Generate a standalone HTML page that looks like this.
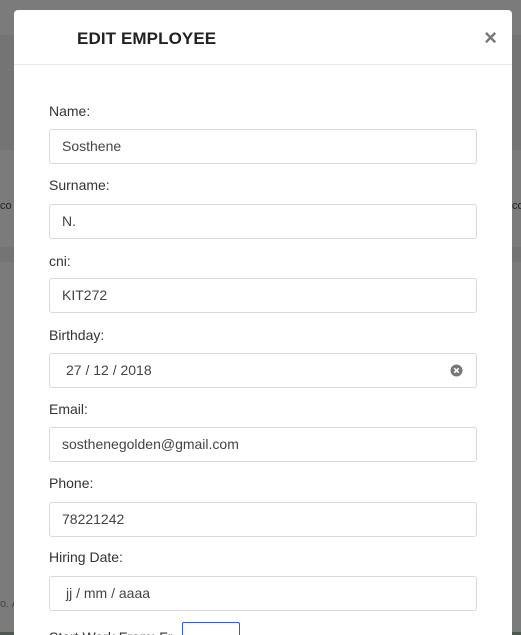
<!DOCTYPE html>
<html><head><style>
html,body{margin:0;width:521px;height:635px;overflow:hidden}
body{background:#7b7b7b;font-family:"Liberation Sans",sans-serif;position:relative}
.band{position:absolute;left:0;right:0;background:#747474}
.modal{position:absolute;left:14px;top:10px;width:498px;height:625px;background:#fff;border-radius:4px 4px 0 0;overflow:hidden}
.hdr{height:54px;border-bottom:1px solid #e3e8ee;position:relative}
.hdr h4{margin:0;position:absolute;left:63px;top:19px;font-size:17px;font-weight:bold;letter-spacing:0.1px;color:#222}
.x{position:absolute;right:15px;top:15px;font-size:22px;color:#777;font-weight:bold}
.lbl{position:absolute;left:35px;font-size:14px;color:#333}
.in{position:absolute;left:35px;width:426px;height:33px;border:1px solid #d9d9d9;border-radius:3px;font-size:14px;color:#444;line-height:33px;box-sizing:content-box}
.in span{padding-left:12px}
</style></head><body>
<div class="band" style="top:35px;height:115px"></div>
<div class="band" style="top:247px;height:15px"></div>
<div style="position:absolute;left:0;top:200px;font-size:11px;color:#222">co</div>
<div style="position:absolute;left:512px;top:200px;font-size:11px;color:#222">co</div>
<div style="position:absolute;left:0;top:598px;font-size:11px;color:#444">o. A</div>
<div style="position:absolute;left:0;right:0;top:632px;height:3px;background:#4a5a50"></div>
<div class="modal">
<div class="hdr"><h4>EDIT EMPLOYEE</h4><div class="x">×</div></div>
<div class="lbl" style="top:93px">Name:</div>
<div class="in" style="top:119px"><span>Sosthene</span></div>
<div class="lbl" style="top:167px">Surname:</div>
<div class="in" style="top:194px"><span>N.</span></div>
<div class="lbl" style="top:243px">cni:</div>
<div class="in" style="top:268px"><span>KIT272</span></div>
<div class="lbl" style="top:317px">Birthday:</div>
<div class="in" style="top:343px"><span style="padding-left:16px">27 / 12 / 2018</span>
<svg style="position:absolute;right:13px;top:10px" width="13" height="13" viewBox="0 0 13 13"><circle cx="6.5" cy="6.5" r="6" fill="#777"/><path d="M4.3 4.3L8.7 8.7M8.7 4.3L4.3 8.7" stroke="#fff" stroke-width="1.6"/></svg></div>
<div class="lbl" style="top:391px">Email:</div>
<div class="in" style="top:417px"><span>sosthenegolden@gmail.com</span></div>
<div class="lbl" style="top:465px">Phone:</div>
<div class="in" style="top:492px"><span>78221242</span></div>
<div class="lbl" style="top:539px">Hiring Date:</div>
<div class="in" style="top:566px"><span style="padding-left:16px">jj / mm / aaaa</span></div>
<div class="lbl" style="top:619px">Start Work From: Fr</div>
<div style="position:absolute;left:168px;top:612px;width:56px;height:20px;border:1px solid #3355ee;border-radius:2px;background:#fff"></div>
</div>
</body></html>
